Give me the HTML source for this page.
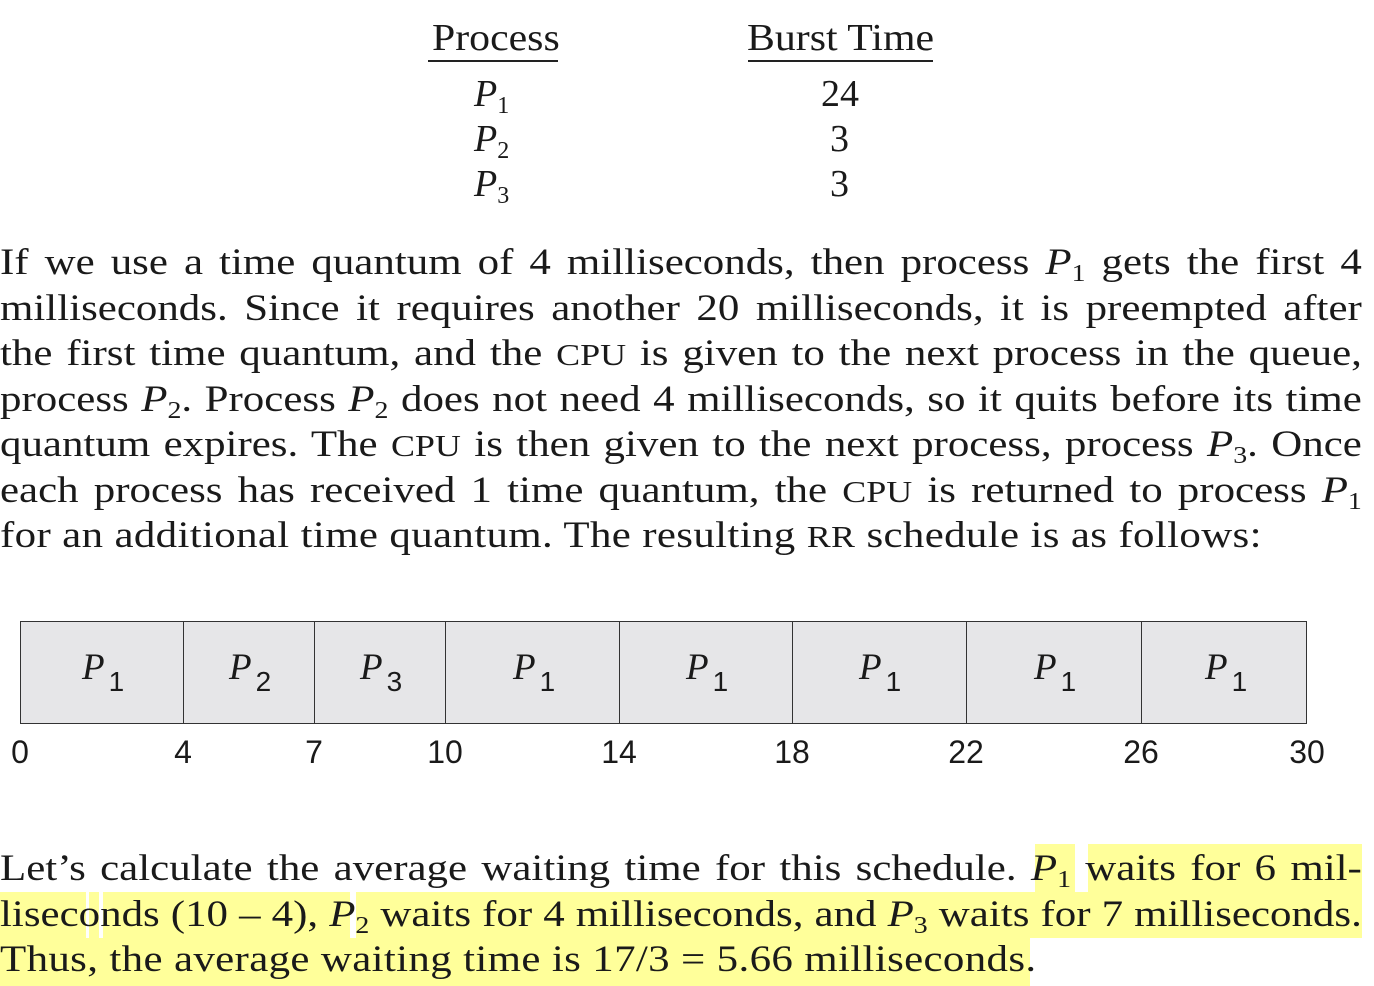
<!DOCTYPE html><html><head><style>
body{margin:0;width:1374px;height:986px;background:#fff;position:relative;overflow:hidden;font-family:"Liberation Serif",serif;color:#1a1a1a}
.a{position:absolute}
.l{position:absolute;left:0;width:1174px;font-size:37px;line-height:46px;text-align:justify;text-align-last:justify;white-space:nowrap;transform:scaleX(1.16);transform-origin:0 0}
.n{text-align-last:left;letter-spacing:0.3px}
i{font-style:italic}
sub{font-size:24px;vertical-align:-7px;line-height:0;font-style:normal}
.sc{font-size:31px}
.hl{position:absolute;background:#ffff9a}
.g{position:absolute;top:621px;height:103px;border:1.5px solid #333;background:#e6e6e8;box-sizing:border-box}
.gp{position:absolute;top:646px;font-size:37px;font-style:italic;font-family:"Liberation Serif",serif}
.gp span{font-family:"Liberation Sans",sans-serif;font-style:normal;font-size:28px;position:relative;top:12px;left:4px}
.t{position:absolute;top:734px;font-family:"Liberation Sans",sans-serif;font-size:32px;transform:translateX(-50%)}
.h{position:absolute;font-size:38px;top:16px;transform:scaleX(1.1);transform-origin:0 0}
.r{position:absolute;font-size:38px}
</style></head><body>
<div class="h" style="left:432px;">Process</div>
<div class="a" style="left:428px;top:60px;width:130px;height:2px;background:#222"></div>
<div class="h" style="left:747px;">Burst Time</div>
<div class="a" style="left:748px;top:60px;width:185px;height:2px;background:#222"></div>
<div class="r" style="left:474px;top:72px"><i>P</i><sub>1</sub></div>
<div class="r" style="left:474px;top:117px"><i>P</i><sub>2</sub></div>
<div class="r" style="left:474px;top:162px"><i>P</i><sub>3</sub></div>
<div class="r" style="left:821px;top:72px">24</div>
<div class="r" style="left:830px;top:117px">3</div>
<div class="r" style="left:830px;top:162px">3</div>

<div class="l" style="top:240px">If we use a time quantum of 4 milliseconds, then process <i>P</i><sub>1</sub> gets the first 4</div>
<div class="l" style="top:286px">milliseconds. Since it requires another 20 milliseconds, it is preempted after</div>
<div class="l" style="top:331px">the first time quantum, and the <span class="sc">CPU</span> is given to the next process in the queue,</div>
<div class="l" style="top:377px">process <i>P</i><sub>2</sub>. Process <i>P</i><sub>2</sub> does not need 4 milliseconds, so it quits before its time</div>
<div class="l" style="top:422px">quantum expires. The <span class="sc">CPU</span> is then given to the next process, process <i>P</i><sub>3</sub>. Once</div>
<div class="l" style="top:468px">each process has received 1 time quantum, the <span class="sc">CPU</span> is returned to process <i>P</i><sub>1</sub></div>
<div class="l n" style="top:513px">for an additional time quantum. The resulting <span class="sc">RR</span> schedule is as follows:</div>

<div class="g" style="left:20px;width:164px"></div>
<div class="g" style="left:183px;width:132px"></div>
<div class="g" style="left:314px;width:132px"></div>
<div class="g" style="left:445px;width:175px"></div>
<div class="g" style="left:619px;width:174px"></div>
<div class="g" style="left:792px;width:175px"></div>
<div class="g" style="left:966px;width:176px"></div>
<div class="g" style="left:1141px;width:166px"></div>
<div class="gp" style="left:82px"><i>P</i><span>1</span></div>
<div class="gp" style="left:229px"><i>P</i><span>2</span></div>
<div class="gp" style="left:360px"><i>P</i><span>3</span></div>
<div class="gp" style="left:513px"><i>P</i><span>1</span></div>
<div class="gp" style="left:686px"><i>P</i><span>1</span></div>
<div class="gp" style="left:859px"><i>P</i><span>1</span></div>
<div class="gp" style="left:1034px"><i>P</i><span>1</span></div>
<div class="gp" style="left:1205px"><i>P</i><span>1</span></div>
<div class="t" style="left:20px">0</div><div class="t" style="left:183px">4</div><div class="t" style="left:314px">7</div><div class="t" style="left:445px">10</div><div class="t" style="left:619px">14</div><div class="t" style="left:792px">18</div><div class="t" style="left:966px">22</div><div class="t" style="left:1141px">26</div><div class="t" style="left:1307px">30</div>

<div class="hl" style="left:1035px;top:844px;width:40px;height:48px"></div>
<div class="hl" style="left:1088px;top:844px;width:274px;height:48px"></div>
<div class="hl" style="left:0;top:892px;width:86px;height:46px"></div>
<div class="hl" style="left:89px;top:892px;width:10px;height:46px"></div>
<div class="hl" style="left:103px;top:892px;width:247px;height:46px"></div>
<div class="hl" style="left:356px;top:892px;width:1006px;height:46px"></div>
<div class="hl" style="left:0;top:938px;width:1030px;height:48px"></div>
<div class="l" style="top:846px">Let’s calculate the average waiting time for this schedule. <i>P</i><sub>1</sub> waits for 6 mil-</div>
<div class="l" style="top:892px">liseconds (10 – 4), <i>P</i><sub>2</sub> waits for 4 milliseconds, and <i>P</i><sub>3</sub> waits for 7 milliseconds.</div>
<div class="l n" style="top:937px">Thus, the average waiting time is 17/3 = 5.66 milliseconds.</div>
</body></html>
